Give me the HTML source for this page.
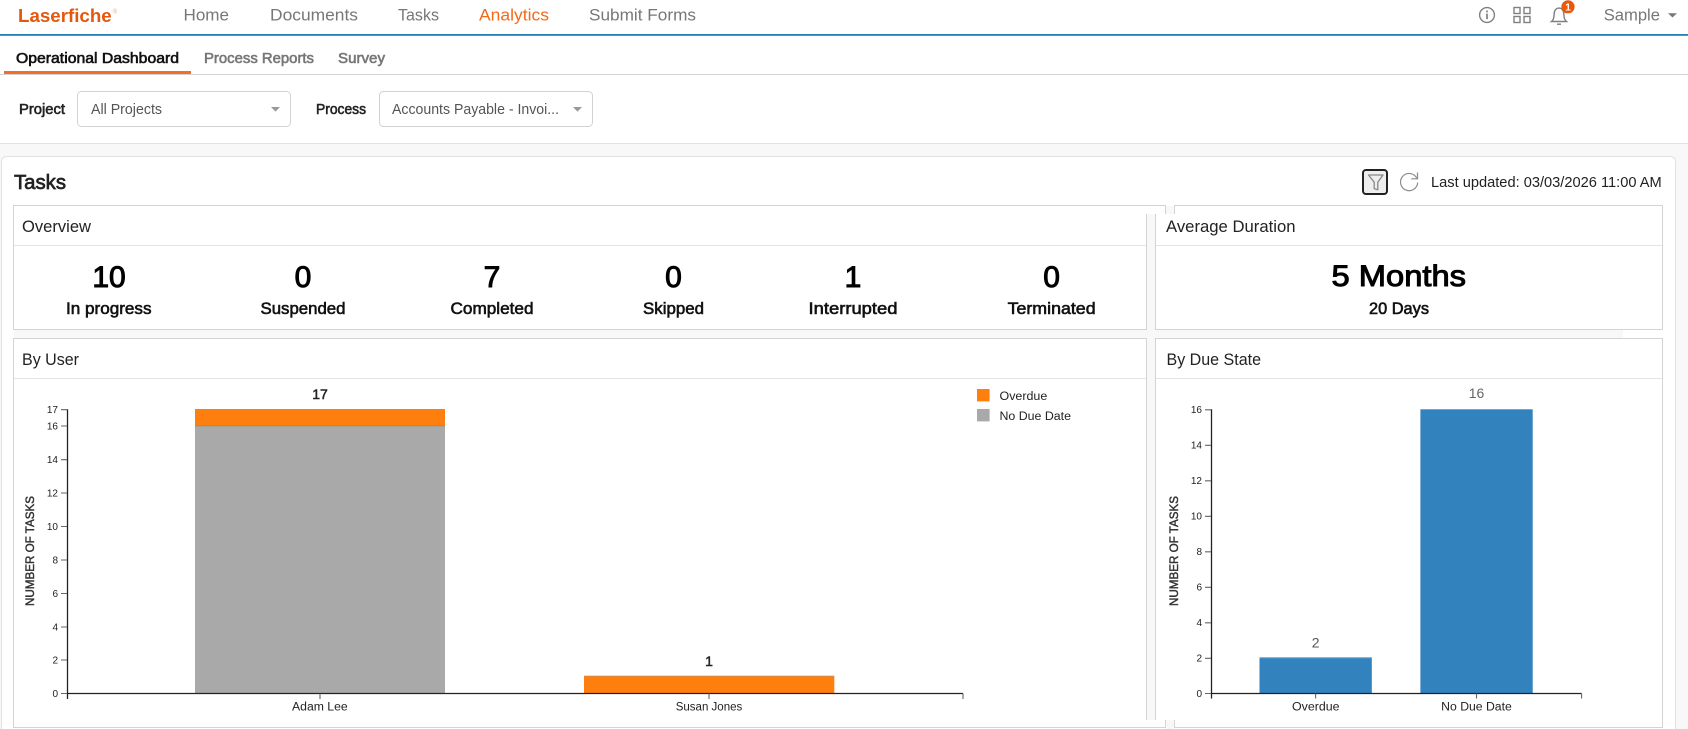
<!DOCTYPE html>
<html lang="en">
<head>
<meta charset="utf-8">
<title>Tasks Dashboard</title>
<style>
html,body{margin:0;padding:0;width:1688px;height:729px;overflow:hidden;background:#fff}
svg{display:block}
text{font-family:"Liberation Sans",Arial,sans-serif}
.nav{font-size:16.5px;fill:#777}
.tab{font-size:14.5px;fill:#777;stroke:#777;stroke-width:.6}
.lab{font-size:14.5px;fill:#222;stroke:#222;stroke-width:.6}
.dd{font-size:14.5px;fill:#555}
.pt{font-size:16.5px;fill:#222}
.num{font-size:30px;fill:#000;stroke:#000;stroke-width:1;text-anchor:middle}
.sub{font-size:16.5px;fill:#111;stroke:#111;stroke-width:.6}
.tk{font-size:10px;fill:#222;text-anchor:end}
.ax{font-size:11.5px;fill:#222}
.yt{font-size:12px;fill:#333;stroke:#333;stroke-width:.45}
.b{stroke:#d4d4d4;stroke-width:1;fill:none}
.d{stroke:#e4e4e4;stroke-width:1;fill:none}
.axis{stroke:#222;stroke-width:1.3;fill:none}
.tick{stroke:#666;stroke-width:1.1;fill:none}
.ic{stroke:#808080;stroke-width:1.4;fill:none}
</style>
</head>
<body>
<svg width="1688" height="729" viewBox="0 0 1688 729" xmlns="http://www.w3.org/2000/svg">
<rect width="1688" height="729" fill="#fff"/>
<!-- page areas -->
<rect x="0" y="34" width="1688" height="1.8" fill="#2a7bb2"/>
<rect x="0" y="74" width="1688" height="1" fill="#d2d2d2"/>
<rect x="0" y="144" width="1688" height="585" fill="#f8f8f8"/>
<rect x="0" y="143" width="1688" height="1" fill="#e2e2e2"/>
<rect x="1.5" y="156.5" width="1674" height="600" rx="5" fill="#fff" stroke="#e2e2e2"/>

<!-- top nav -->
<text x="18" y="22" font-size="18.5" font-weight="700" fill="#e4570f" textLength="93.7" lengthAdjust="spacingAndGlyphs">Laserfiche</text>
<text x="112.6" y="13.5" font-size="6" fill="#eda97f">®</text>
<text class="nav" x="183.5" y="20.7" textLength="45.5" lengthAdjust="spacingAndGlyphs">Home</text>
<text class="nav" x="270" y="20.7" textLength="88" lengthAdjust="spacingAndGlyphs">Documents</text>
<text class="nav" x="398" y="20.7" textLength="41" lengthAdjust="spacingAndGlyphs">Tasks</text>
<text class="nav" x="479" y="20.7" textLength="70" lengthAdjust="spacingAndGlyphs" style="fill:#f26a1b">Analytics</text>
<text class="nav" x="589" y="20.7" textLength="107" lengthAdjust="spacingAndGlyphs">Submit Forms</text>

<!-- info -->
<circle class="ic" cx="1487" cy="15" r="7.4"/>
<rect x="1486.2" y="10.5" width="1.6" height="1.8" fill="#777"/>
<rect x="1486.2" y="13.6" width="1.6" height="5.6" fill="#777"/>
<!-- grid -->
<rect class="ic" x="1514" y="7.5" width="6" height="6"/>
<rect class="ic" x="1524" y="7.5" width="6" height="6"/>
<rect class="ic" x="1514" y="16.5" width="6" height="6"/>
<rect class="ic" x="1524" y="16.5" width="6" height="6"/>
<!-- bell -->
<path class="ic" d="M1551.5 21.5c2-1.6 2.6-3.4 2.6-7 0-3.6 1.8-6.4 4.9-6.4s4.9 2.8 4.9 6.4c0 3.6 .6 5.4 2.6 7z"/>
<path class="ic" d="M1557 24.2h4"/>
<circle cx="1568" cy="6.8" r="6.6" fill="#e8590c"/>
<text x="1568" y="10.4" font-size="10" font-weight="700" fill="#fff" text-anchor="middle">1</text>
<text class="nav" x="1603.7" y="20.7" textLength="56.3" lengthAdjust="spacingAndGlyphs">Sample</text>
<path d="M1668 13.3h9l-4.5 4.2z" fill="#777"/>

<!-- tabs -->
<text class="tab" x="16" y="63" textLength="163" lengthAdjust="spacingAndGlyphs" style="fill:#111;stroke:#111">Operational Dashboard</text>
<text class="tab" x="204" y="63" textLength="110" lengthAdjust="spacingAndGlyphs">Process Reports</text>
<text class="tab" x="338" y="63" textLength="47" lengthAdjust="spacingAndGlyphs">Survey</text>
<rect x="4" y="71" width="187" height="3" fill="#f0702a"/>

<!-- filters -->
<text class="lab" x="19" y="114" textLength="46" lengthAdjust="spacingAndGlyphs">Project</text>
<rect x="77.5" y="91.5" width="213" height="35" rx="4" fill="#fff" stroke="#d2d2d2"/>
<text class="dd" x="91" y="114" textLength="71" lengthAdjust="spacingAndGlyphs">All Projects</text>
<path d="M271 107h9l-4.5 4.6z" fill="#999"/>
<text class="lab" x="316" y="114" textLength="50" lengthAdjust="spacingAndGlyphs">Process</text>
<rect x="379.5" y="91.5" width="213" height="35" rx="4" fill="#fff" stroke="#d2d2d2"/>
<text class="dd" x="392" y="114" textLength="167" lengthAdjust="spacingAndGlyphs">Accounts Payable - Invoi...</text>
<path d="M573 107h9l-4.5 4.6z" fill="#999"/>

<!-- Tasks header -->
<text x="14" y="189" font-size="20" fill="#222" stroke="#222" stroke-width=".7" textLength="52" lengthAdjust="spacingAndGlyphs">Tasks</text>
<rect x="1363" y="170" width="24" height="24" rx="3" fill="#eee" stroke="#222" stroke-width="2"/>
<path d="M1368.5 175h14.5l-5.2 7.2v7.6l-3.6-1.2v-6.4z" fill="none" stroke="#888" stroke-width="1.3" stroke-linejoin="round"/>
<path d="M1416.8 178.2a8.6 8.6 0 1 0 .9 4.3" fill="none" stroke="#8c8c8c" stroke-width="1.2"/>
<path d="M1417.5 172.5v6.3h-6.3" fill="none" stroke="#8c8c8c" stroke-width="1.2"/>
<text x="1431" y="187" font-size="14.5" fill="#222" textLength="230.7" lengthAdjust="spacingAndGlyphs">Last updated: 03/03/2026 11:00 AM</text>

<!-- gray gutters -->
<rect x="1166" y="206" width="8" height="8" fill="#f8f8f8"/>
<rect x="1147" y="214" width="8.5" height="506" fill="#f8f8f8"/>
<rect x="14" y="330" width="1609" height="8" fill="#f8f8f8"/>
<rect x="1166" y="720" width="8" height="9" fill="#f8f8f8"/>

<!-- Overview panel -->
<path class="b" d="M1165.5 214V205.5H13.5V329.5H1146.5V214"/>
<path class="d" d="M14 245.5H1146"/>
<text class="pt" x="22" y="232" textLength="69" lengthAdjust="spacingAndGlyphs">Overview</text>
<text class="num" x="109" y="287">10</text>
<text class="num" x="303" y="287">0</text>
<text class="num" x="492" y="287">7</text>
<text class="num" x="673.5" y="287">0</text>
<text class="num" x="853" y="287">1</text>
<text class="num" x="1051.6" y="287">0</text>
<text class="sub" x="66" y="314" textLength="85.5" lengthAdjust="spacingAndGlyphs">In progress</text>
<text class="sub" x="260.5" y="314" textLength="85" lengthAdjust="spacingAndGlyphs">Suspended</text>
<text class="sub" x="450.5" y="314" textLength="83" lengthAdjust="spacingAndGlyphs">Completed</text>
<text class="sub" x="643" y="314" textLength="61" lengthAdjust="spacingAndGlyphs">Skipped</text>
<text class="sub" x="808.5" y="314" textLength="89" lengthAdjust="spacingAndGlyphs">Interrupted</text>
<text class="sub" x="1007.6" y="314" textLength="88" lengthAdjust="spacingAndGlyphs">Terminated</text>

<!-- Average Duration panel -->
<path class="b" d="M1174.5 214V205.5H1662.5V329.5H1155.5V214"/>
<path class="d" d="M1156 245.5H1662"/>
<text class="pt" x="1166" y="232" textLength="129.5" lengthAdjust="spacingAndGlyphs">Average Duration</text>
<text x="1331.5" y="286" font-size="30" fill="#000" stroke="#000" stroke-width="1" textLength="134.5" lengthAdjust="spacingAndGlyphs">5 Months</text>
<text class="sub" x="1369" y="314" textLength="60" lengthAdjust="spacingAndGlyphs">20 Days</text>

<!-- By User panel -->
<path class="b" d="M1146.5 720V338.5H13.5V727.5H1165.5V720"/>
<path class="d" d="M14 378.5H1146"/>
<text class="pt" x="22" y="365" textLength="57" lengthAdjust="spacingAndGlyphs">By User</text>
<text class="yt" transform="translate(34 606) rotate(-90)" textLength="110" lengthAdjust="spacingAndGlyphs">NUMBER OF TASKS</text>

<rect x="195" y="409" width="250" height="17" fill="#ff7f0e"/>
<rect x="195" y="426" width="250" height="267.5" fill="#a9a9a9"/>
<rect x="195" y="425.3" width="250" height="1" fill="#a98a5e"/>
<rect x="584" y="676" width="250.3" height="17.5" fill="#ff7f0e"/>
<rect x="584" y="675.7" width="250.3" height="1" fill="#d98a3e"/>
<text x="320" y="399" font-size="14" fill="#222" stroke="#222" stroke-width=".5" text-anchor="middle">17</text>
<text x="709" y="666" font-size="14" fill="#222" stroke="#222" stroke-width=".5" text-anchor="middle">1</text>

<path class="axis" d="M67.5 409.3V699M67.5 693.5H963"/>
<path class="tick" d="M61 409.7H67M61 426H67M61 459.7H67M61 493H67M61 526.5H67M61 560H67M61 593.5H67M61 627H67M61 660H67M61 693.5H67"/>
<path class="tick" d="M320 693.5V699M709 693.5V699M963 693.5V699"/>
<text class="tk" x="58" y="413">17</text>
<text class="tk" x="58" y="429.5">16</text>
<text class="tk" x="58" y="463.2">14</text>
<text class="tk" x="58" y="496.5">12</text>
<text class="tk" x="58" y="530">10</text>
<text class="tk" x="58" y="563.5">8</text>
<text class="tk" x="58" y="597">6</text>
<text class="tk" x="58" y="630.5">4</text>
<text class="tk" x="58" y="663.5">2</text>
<text class="tk" x="58" y="697">0</text>
<text class="ax" x="292" y="710.7" textLength="55.7" lengthAdjust="spacingAndGlyphs">Adam Lee</text>
<text class="ax" x="675.7" y="710.7" textLength="66.6" lengthAdjust="spacingAndGlyphs">Susan Jones</text>

<rect x="977" y="389" width="12.6" height="12.4" fill="#ff7f0e"/>
<text class="ax" x="999.5" y="400" textLength="47.8" lengthAdjust="spacingAndGlyphs">Overdue</text>
<rect x="977" y="409" width="12.6" height="12.4" fill="#a9a9a9"/>
<text class="ax" x="999.5" y="420" textLength="71.5" lengthAdjust="spacingAndGlyphs">No Due Date</text>

<!-- By Due State panel -->
<path class="b" d="M1155.5 720V338.5H1662.5V727.5H1174.5V720"/>
<path class="d" d="M1156 378.5H1662"/>
<text class="pt" x="1166.5" y="365" textLength="94.5" lengthAdjust="spacingAndGlyphs">By Due State</text>
<text class="yt" transform="translate(1178 606) rotate(-90)" textLength="110" lengthAdjust="spacingAndGlyphs">NUMBER OF TASKS</text>

<rect x="1259.5" y="657.3" width="112.3" height="36" fill="#3182bd"/>
<rect x="1259.5" y="657.3" width="112.3" height="1" fill="#6baed6"/>
<rect x="1420.4" y="409.3" width="112.3" height="284" fill="#3182bd"/>
<text x="1315.6" y="647.3" font-size="14" fill="#555" text-anchor="middle">2</text>
<text x="1476.5" y="398" font-size="14" fill="#666" text-anchor="middle">16</text>

<path class="axis" d="M1211.5 409.3V698.5M1211.5 693.5H1581.6"/>
<path class="tick" d="M1205 409.8H1211M1205 445.3H1211M1205 480.8H1211M1205 516.3H1211M1205 551.8H1211M1205 587.3H1211M1205 622.8H1211M1205 658.3H1211M1205 693.5H1211"/>
<path class="tick" d="M1315.6 693.5V698.5M1476.5 693.5V698.5M1581.6 693.5V698.5"/>
<text class="tk" x="1202" y="413">16</text>
<text class="tk" x="1202" y="448.5">14</text>
<text class="tk" x="1202" y="484">12</text>
<text class="tk" x="1202" y="519.5">10</text>
<text class="tk" x="1202" y="555">8</text>
<text class="tk" x="1202" y="590.5">6</text>
<text class="tk" x="1202" y="626">4</text>
<text class="tk" x="1202" y="661.5">2</text>
<text class="tk" x="1202" y="697">0</text>
<text class="ax" x="1292" y="710.7" textLength="47.5" lengthAdjust="spacingAndGlyphs">Overdue</text>
<text class="ax" x="1441.2" y="710.7" textLength="70.6" lengthAdjust="spacingAndGlyphs">No Due Date</text>
</svg>
</body>
</html>
